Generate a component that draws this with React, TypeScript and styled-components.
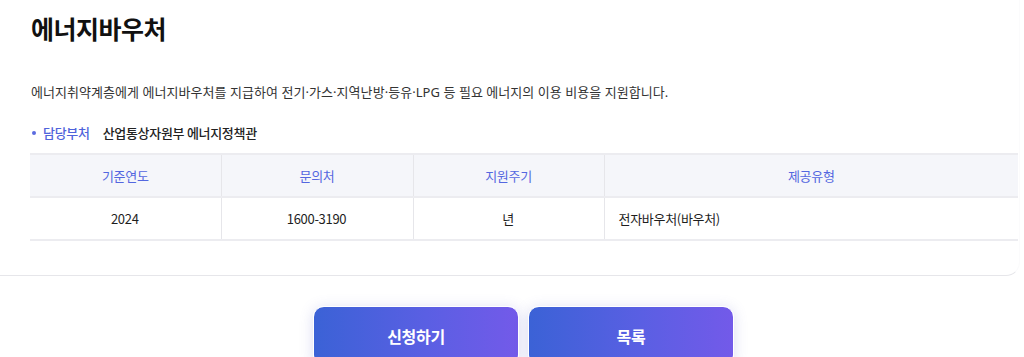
import React from "react";
import styled, { createGlobalStyle } from "styled-components";

const GlobalStyle = createGlobalStyle`
  html, body { margin: 0; padding: 0; background: #fff; }
  body { font-family: "Noto Sans CJK KR", "Noto Sans", sans-serif; color: #222; overflow: hidden; }
  * { box-sizing: border-box; }
`;

const Page = styled.div`
  width: 1024px;
  height: 357px;
  overflow: hidden;
`;

const Card = styled.section`
  margin-left: -20px;
  width: 1040px;
  padding: 10px 22px 34px 50px;
  border-bottom: 1px solid #e6e6ea;
  border-right: 1px solid #fbfbfc;
  border-radius: 0 0 14px 14px;
`;

const Title = styled.h2`
  margin: 0 0 0 1px;
  font-size: 25px;
  font-weight: 700;
  line-height: 36px;
  letter-spacing: -0.5px;
  color: #111;
`;

const Desc = styled.p`
  margin: 36px 0 0 1px;
  font-family: "Noto Sans", "Noto Sans CJK KR", sans-serif;
  font-size: 13px;
  line-height: 20px;
  letter-spacing: 0.05px;
  color: #333;
`;

const DeptRow = styled.div`
  display: flex;
  align-items: center;
  margin-top: 21px;
  font-size: 13px;
  line-height: 20px;
  letter-spacing: -0.3px;
`;

const Dot = styled.span`
  width: 4px;
  height: 4px;
  border-radius: 50%;
  background: #5b6be0;
  margin: 0 7px 0 2px;
`;

const DeptLabel = styled.span`
  color: #4f63db;
  font-weight: 500;
  margin-right: 13px;
`;

const DeptValue = styled.span`
  color: #222;
  font-weight: 500;
`;

const Table = styled.table`
  margin-top: 10px;
  width: 988px;
  border-collapse: collapse;
  font-size: 13px;
  letter-spacing: -0.3px;
`;

const Th = styled.th<{ $w?: number }>`
  width: ${(p) => (p.$w ? `${p.$w}px` : "auto")};
  height: 43px;
  background: #f5f6fa;
  color: #5467e0;
  font-weight: 400;
  text-align: center;
  border-top: 2px solid #ececf0;
  border-bottom: 2px solid #ececf0;
  border-left: 1px solid #e6e6ea;
  &:first-child { border-left: none; }
`;

const Td = styled.td<{ $left?: boolean }>`
  height: 43px;
  text-align: ${(p) => (p.$left ? "left" : "center")};
  padding-left: ${(p) => (p.$left ? "14px" : "0")};
  color: #1e1e1e;
  font-weight: 400;
  border-bottom: 2px solid #ececf0;
  border-left: 1px solid #e6e6ea;
  &:first-child { border-left: none; }
`;

const Actions = styled.div`
  display: flex;
  justify-content: center;
  gap: 9px;
  margin-top: 30px;
  padding-left: 23px;
`;

const Button = styled.button`
  width: 206px;
  height: 60px;
  border: 1px solid #fff;
  border-radius: 11px;
  background: linear-gradient(90deg, #3b62d6 0%, #5a5fe3 55%, #735ae9 100%);
  color: #fff;
  font-family: "Noto Sans CJK KR", "Noto Sans", sans-serif;
  font-size: 16px;
  font-weight: 700;
  letter-spacing: -0.3px;
  box-shadow: 0 2px 14px rgba(90, 95, 200, 0.22);
  cursor: pointer;
`;

export default function App() {
  return (
    <Page>
      <GlobalStyle />
      <Card>
        <Title>에너지바우처</Title>
        <Desc>
          에너지취약계층에게 에너지바우처를 지급하여 전기·가스·지역난방·등유·LPG 등 필요 에너지의 이용 비용을 지원합니다.
        </Desc>
        <DeptRow>
          <Dot />
          <DeptLabel>담당부처</DeptLabel>
          <DeptValue>산업통상자원부 에너지정책관</DeptValue>
        </DeptRow>
        <Table>
          <thead>
            <tr>
              <Th $w={191}>기준연도</Th>
              <Th $w={192}>문의처</Th>
              <Th $w={191}>지원주기</Th>
              <Th>제공유형</Th>
            </tr>
          </thead>
          <tbody>
            <tr>
              <Td>2024</Td>
              <Td>1600-3190</Td>
              <Td>년</Td>
              <Td $left>전자바우처(바우처)</Td>
            </tr>
          </tbody>
        </Table>
      </Card>
      <Actions>
        <Button>신청하기</Button>
        <Button>목록</Button>
      </Actions>
    </Page>
  );
}
